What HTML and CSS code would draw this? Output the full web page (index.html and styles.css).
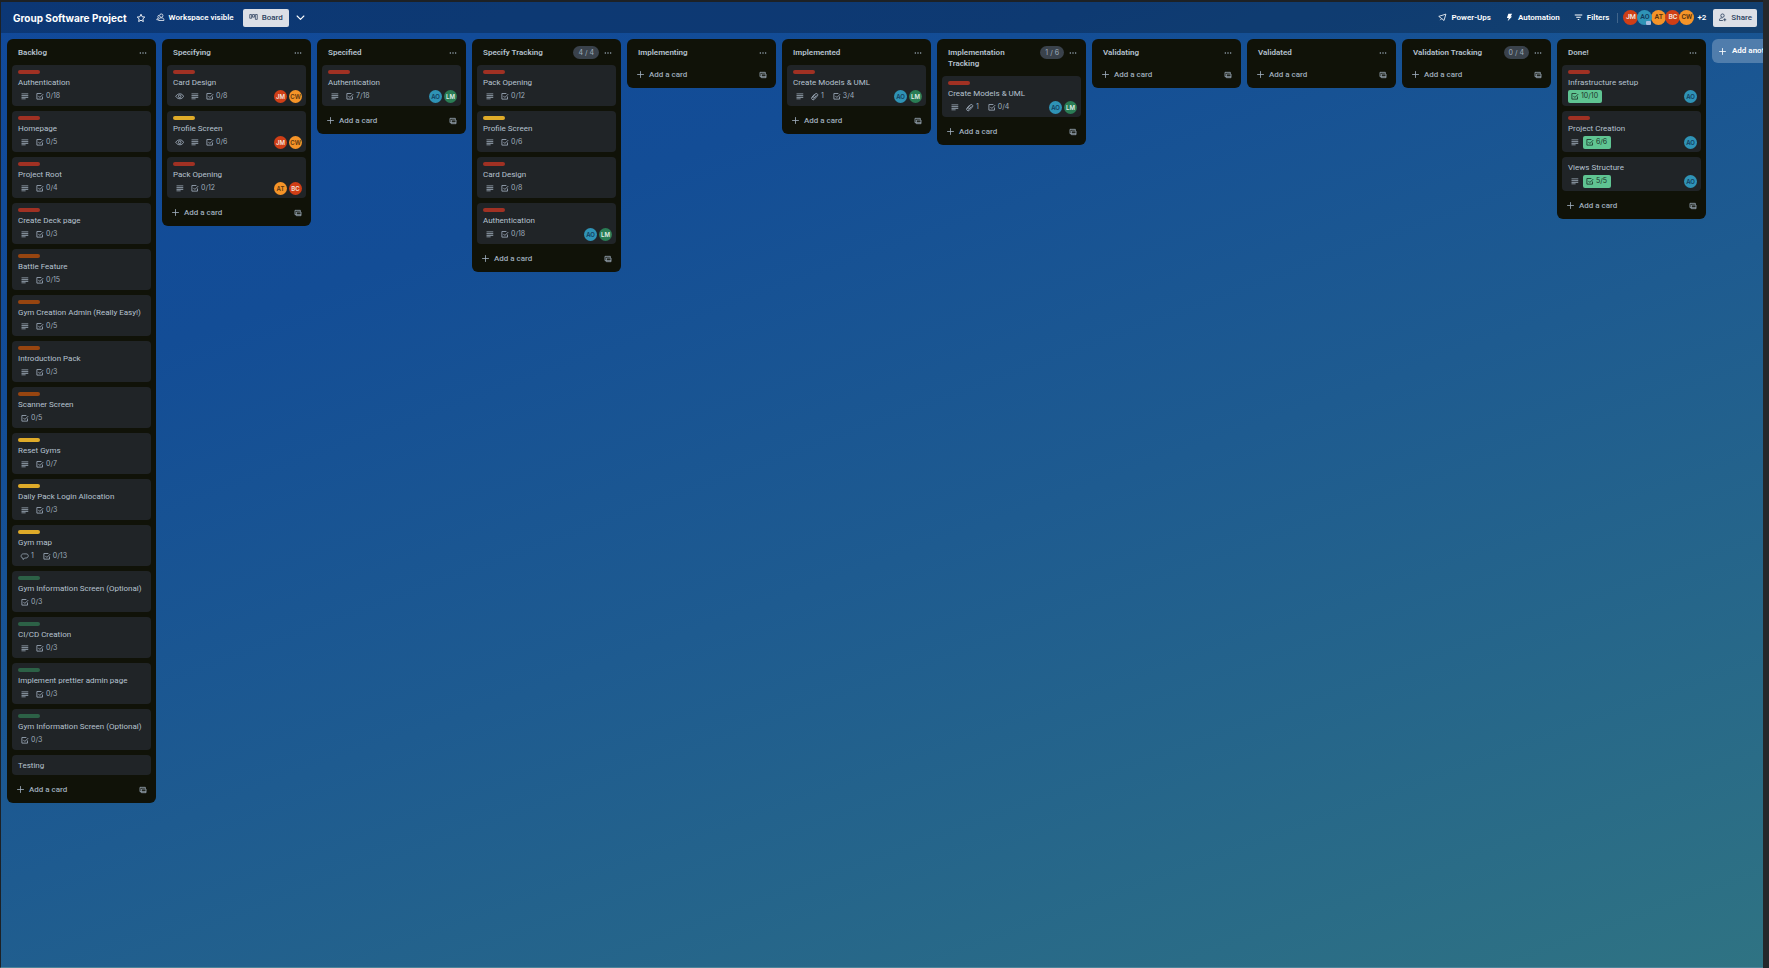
FILE: index.html
```
<!DOCTYPE html>
<html lang="en">
<head>
<meta charset="utf-8">
<title>Group Software Project</title>
<link rel="stylesheet" href="styles.css">
</head>
<body>
<svg class="sprite" aria-hidden="true">
  <symbol id="desc" viewBox="0 0 24 24"><path fill="currentColor" d="M4 4h18v2.200H4zM4 8.400h18v2.200H4zM4 12.800h18v2.200H4zM4 17.200h11v2.200H4z"/></symbol>
  <symbol id="check" viewBox="0 0 24 24"><path fill="none" stroke="currentColor" stroke-width="2.200" stroke-linejoin="round" d="M17 4H5v15h15v-7M9 10.500l4 4 9-9"/></symbol>
  <symbol id="eye" viewBox="0 0 24 24"><path fill="none" stroke="currentColor" stroke-width="2.400" d="M2 11.500c3-5 7-6.500 11-6.500s7 1.500 10 6.500c-3 5-6 6.500-10 6.500s-8-1.500-11-6.500z"/><circle cx="12.500" cy="11.500" r="3.500" fill="none" stroke="currentColor" stroke-width="2.400"/></symbol>
  <symbol id="comment" viewBox="0 0 24 24"><path fill="none" stroke="currentColor" stroke-width="2" d="M8 16c-3 0-5-2-5-5s2-6 6-6h7c4 0 6 2 6 5s-2 6-6 6h-3l-5 4z"/></symbol>
  <symbol id="clip" viewBox="0 0 24 24"><path fill="none" stroke="currentColor" stroke-width="2.400" d="M12 6l-7 8c-3 4 3 9 6 6l9-10c3-4-3-8-6-5L8 13c-2 3 1 4 3 3l6-7"/></symbol>
  <symbol id="plus" viewBox="0 0 24 24"><path fill="none" stroke="currentColor" stroke-width="2.200" d="M12 3v18M3 12h18"/></symbol>
  <symbol id="template" viewBox="0 0 24 24"><path fill="none" stroke="currentColor" stroke-width="2.400" stroke-linejoin="round" d="M6 17H3V4h16v4M7 9h14v11H7zM7 16h14"/></symbol>
  <symbol id="dots" viewBox="0 0 24 24"><g fill="currentColor"><circle cx="4" cy="12" r="2.200"/><circle cx="12" cy="12" r="2.200"/><circle cx="20" cy="12" r="2.200"/></g></symbol>
  <symbol id="star" viewBox="0 0 24 24"><path fill="none" stroke="currentColor" stroke-width="2.200" stroke-linejoin="round" d="M12 3l2.800 6 6.200.8-4.600 4.300 1.200 6.400L12 17.400l-5.600 3.100 1.200-6.400L3 9.800 9.200 9z"/></symbol>
  <symbol id="people" viewBox="0 0 24 24"><g fill="none" stroke="currentColor" stroke-width="2"><circle cx="14" cy="7" r="4.500"/><path d="M7 20v-2c0-4 3-5 7-5s7 1 7 5v2zM8 6c-4 1-4 5-1 7-3 1-5 2-5 5h4"/></g></symbol>
  <symbol id="board" viewBox="0 0 24 20"><g fill="none" stroke="currentColor" stroke-width="2"><path d="M2 2h5v10H2zM9.500 2h5v7h-5zM17 2h5v13h-5z"/></g></symbol>
  <symbol id="chevron" viewBox="0 0 24 24"><path fill="none" stroke="currentColor" stroke-width="3" stroke-linecap="round" stroke-linejoin="round" d="M3 8l9 9 9-9"/></symbol>
  <symbol id="rocket" viewBox="0 0 24 24"><path fill="none" stroke="currentColor" stroke-width="2.200" stroke-linejoin="round" d="M2 9L21 3l-5 17-6-5zM10 15l-4 4"/></symbol>
  <symbol id="bolt" viewBox="0 0 24 24"><path fill="currentColor" d="M9 2h10l-4 7h4L7 22l3-9H5z"/></symbol>
  <symbol id="filter" viewBox="0 0 24 24"><path fill="currentColor" d="M2 4h20v2.500H2zM6 10h12v2.500H6zM10 16h4v2.500h-4z"/></symbol>
  <symbol id="share" viewBox="0 0 24 24"><g fill="none" stroke="currentColor" stroke-width="2.200"><circle cx="12" cy="7" r="4.500"/><path d="M13 20H4v-2c0-4 4-5 8-5M18 14v8M14 18h8"/></g></symbol>
</svg>
<div class="app">
<header class="topbar">
  <h1>Group Software Project</h1>
  <button class="tool star" aria-label="Star board"><svg class="i10"><use href="#star"/></svg></button>
  <button class="tool visibility"><svg class="i9"><use href="#people"/></svg>Workspace visible</button>
  <button class="solid view"><svg class="i9"><use href="#board"/></svg>Board</button>
  <button class="tool" aria-label="Views"><svg class="i9"><use href="#chevron"/></svg></button>
  <div class="actions">
    <button class="tool"><svg class="i9"><use href="#rocket"/></svg>Power-Ups</button>
    <button class="tool"><svg class="i9"><use href="#bolt"/></svg>Automation</button>
    <button class="tool"><svg class="i9"><use href="#filter"/></svg>Filters</button>
  </div>
  <div class="members">
    <span class="avatar red">JM</span><span class="avatar blue admin">AO</span><span class="avatar orange">AT</span><span class="avatar red">BC</span><span class="avatar orange">CW</span>
    <button class="tool more">+2</button>
  </div>
  <button class="solid share"><svg class="i9"><use href="#share"/></svg>Share</button>
</header>
<main class="lists">
  <section class="list">
    <header><h2>Backlog</h2><button class="menu" aria-label="List actions"><svg class="i8"><use href="#dots"/></svg></button></header>
    <article class="card"><i class="label l-red"></i><h3>Authentication</h3><div class="badges"><span class="badge"><svg><use href="#desc"/></svg></span><span class="badge"><svg><use href="#check"/></svg><b>0/18</b></span></div></article>
    <article class="card"><i class="label l-red"></i><h3>Homepage</h3><div class="badges"><span class="badge"><svg><use href="#desc"/></svg></span><span class="badge"><svg><use href="#check"/></svg><b>0/5</b></span></div></article>
    <article class="card"><i class="label l-red"></i><h3>Project Root</h3><div class="badges"><span class="badge"><svg><use href="#desc"/></svg></span><span class="badge"><svg><use href="#check"/></svg><b>0/4</b></span></div></article>
    <article class="card"><i class="label l-red"></i><h3>Create Deck page</h3><div class="badges"><span class="badge"><svg><use href="#desc"/></svg></span><span class="badge"><svg><use href="#check"/></svg><b>0/3</b></span></div></article>
    <article class="card"><i class="label l-orange"></i><h3>Battle Feature</h3><div class="badges"><span class="badge"><svg><use href="#desc"/></svg></span><span class="badge"><svg><use href="#check"/></svg><b>0/15</b></span></div></article>
    <article class="card"><i class="label l-orange"></i><h3>Gym Creation Admin (Really Easy!)</h3><div class="badges"><span class="badge"><svg><use href="#desc"/></svg></span><span class="badge"><svg><use href="#check"/></svg><b>0/5</b></span></div></article>
    <article class="card"><i class="label l-orange"></i><h3>Introduction Pack</h3><div class="badges"><span class="badge"><svg><use href="#desc"/></svg></span><span class="badge"><svg><use href="#check"/></svg><b>0/3</b></span></div></article>
    <article class="card"><i class="label l-orange"></i><h3>Scanner Screen</h3><div class="badges"><span class="badge"><svg><use href="#check"/></svg><b>0/5</b></span></div></article>
    <article class="card"><i class="label l-yellow"></i><h3>Reset Gyms</h3><div class="badges"><span class="badge"><svg><use href="#desc"/></svg></span><span class="badge"><svg><use href="#check"/></svg><b>0/7</b></span></div></article>
    <article class="card"><i class="label l-yellow"></i><h3>Daily Pack Login Allocation</h3><div class="badges"><span class="badge"><svg><use href="#desc"/></svg></span><span class="badge"><svg><use href="#check"/></svg><b>0/3</b></span></div></article>
    <article class="card"><i class="label l-yellow"></i><h3>Gym map</h3><div class="badges"><span class="badge"><svg><use href="#comment"/></svg><b>1</b></span><span class="badge"><svg><use href="#check"/></svg><b>0/13</b></span></div></article>
    <article class="card"><i class="label l-green"></i><h3>Gym Information Screen (Optional)</h3><div class="badges"><span class="badge"><svg><use href="#check"/></svg><b>0/3</b></span></div></article>
    <article class="card"><i class="label l-green"></i><h3>CI/CD Creation</h3><div class="badges"><span class="badge"><svg><use href="#desc"/></svg></span><span class="badge"><svg><use href="#check"/></svg><b>0/3</b></span></div></article>
    <article class="card"><i class="label l-green"></i><h3>Implement prettier admin page</h3><div class="badges"><span class="badge"><svg><use href="#desc"/></svg></span><span class="badge"><svg><use href="#check"/></svg><b>0/3</b></span></div></article>
    <article class="card"><i class="label l-green"></i><h3>Gym Information Screen (Optional)</h3><div class="badges"><span class="badge"><svg><use href="#check"/></svg><b>0/3</b></span></div></article>
    <article class="card"><h3>Testing</h3></article>
    <footer><button class="add"><svg class="i9"><use href="#plus"/></svg>Add a card</button><button class="menu" aria-label="Create from template"><svg class="i8"><use href="#template"/></svg></button></footer>
  </section>

  <section class="list">
    <header><h2>Specifying</h2><button class="menu" aria-label="List actions"><svg class="i8"><use href="#dots"/></svg></button></header>
    <article class="card"><i class="label l-red"></i><h3>Card Design</h3><div class="badges"><span class="badge"><svg><use href="#eye"/></svg></span><span class="badge"><svg><use href="#desc"/></svg></span><span class="badge"><svg><use href="#check"/></svg><b>0/8</b></span><span class="who"><span class="avatar red">JM</span><span class="avatar orange">CW</span></span></div></article>
    <article class="card"><i class="label l-yellow"></i><h3>Profile Screen</h3><div class="badges"><span class="badge"><svg><use href="#eye"/></svg></span><span class="badge"><svg><use href="#desc"/></svg></span><span class="badge"><svg><use href="#check"/></svg><b>0/6</b></span><span class="who"><span class="avatar red">JM</span><span class="avatar orange">CW</span></span></div></article>
    <article class="card"><i class="label l-red"></i><h3>Pack Opening</h3><div class="badges"><span class="badge"><svg><use href="#desc"/></svg></span><span class="badge"><svg><use href="#check"/></svg><b>0/12</b></span><span class="who"><span class="avatar orange">AT</span><span class="avatar red">BC</span></span></div></article>
    <footer><button class="add"><svg class="i9"><use href="#plus"/></svg>Add a card</button><button class="menu" aria-label="Create from template"><svg class="i8"><use href="#template"/></svg></button></footer>
  </section>

  <section class="list">
    <header><h2>Specified</h2><button class="menu" aria-label="List actions"><svg class="i8"><use href="#dots"/></svg></button></header>
    <article class="card"><i class="label l-red"></i><h3>Authentication</h3><div class="badges"><span class="badge"><svg><use href="#desc"/></svg></span><span class="badge"><svg><use href="#check"/></svg><b>7/18</b></span><span class="who"><span class="avatar blue">AO</span><span class="avatar green">LM</span></span></div></article>
    <footer><button class="add"><svg class="i9"><use href="#plus"/></svg>Add a card</button><button class="menu" aria-label="Create from template"><svg class="i8"><use href="#template"/></svg></button></footer>
  </section>

  <section class="list">
    <header><h2>Specify Tracking</h2><span class="count">4 / 4</span><button class="menu" aria-label="List actions"><svg class="i8"><use href="#dots"/></svg></button></header>
    <article class="card"><i class="label l-red"></i><h3>Pack Opening</h3><div class="badges"><span class="badge"><svg><use href="#desc"/></svg></span><span class="badge"><svg><use href="#check"/></svg><b>0/12</b></span></div></article>
    <article class="card"><i class="label l-yellow"></i><h3>Profile Screen</h3><div class="badges"><span class="badge"><svg><use href="#desc"/></svg></span><span class="badge"><svg><use href="#check"/></svg><b>0/6</b></span></div></article>
    <article class="card"><i class="label l-red"></i><h3>Card Design</h3><div class="badges"><span class="badge"><svg><use href="#desc"/></svg></span><span class="badge"><svg><use href="#check"/></svg><b>0/8</b></span></div></article>
    <article class="card"><i class="label l-red"></i><h3>Authentication</h3><div class="badges"><span class="badge"><svg><use href="#desc"/></svg></span><span class="badge"><svg><use href="#check"/></svg><b>0/18</b></span><span class="who"><span class="avatar blue">AO</span><span class="avatar green">LM</span></span></div></article>
    <footer><button class="add"><svg class="i9"><use href="#plus"/></svg>Add a card</button><button class="menu" aria-label="Create from template"><svg class="i8"><use href="#template"/></svg></button></footer>
  </section>

  <section class="list">
    <header><h2>Implementing</h2><button class="menu" aria-label="List actions"><svg class="i8"><use href="#dots"/></svg></button></header>
    <footer><button class="add"><svg class="i9"><use href="#plus"/></svg>Add a card</button><button class="menu" aria-label="Create from template"><svg class="i8"><use href="#template"/></svg></button></footer>
  </section>

  <section class="list">
    <header><h2>Implemented</h2><button class="menu" aria-label="List actions"><svg class="i8"><use href="#dots"/></svg></button></header>
    <article class="card"><i class="label l-red"></i><h3>Create Models &amp; UML</h3><div class="badges"><span class="badge"><svg><use href="#desc"/></svg></span><span class="badge"><svg><use href="#clip"/></svg><b>1</b></span><span class="badge"><svg><use href="#check"/></svg><b>3/4</b></span><span class="who"><span class="avatar blue">AO</span><span class="avatar green">LM</span></span></div></article>
    <footer><button class="add"><svg class="i9"><use href="#plus"/></svg>Add a card</button><button class="menu" aria-label="Create from template"><svg class="i8"><use href="#template"/></svg></button></footer>
  </section>

  <section class="list">
    <header><h2>Implementation Tracking</h2><span class="count">1 / 6</span><button class="menu" aria-label="List actions"><svg class="i8"><use href="#dots"/></svg></button></header>
    <article class="card"><i class="label l-red"></i><h3>Create Models &amp; UML</h3><div class="badges"><span class="badge"><svg><use href="#desc"/></svg></span><span class="badge"><svg><use href="#clip"/></svg><b>1</b></span><span class="badge"><svg><use href="#check"/></svg><b>0/4</b></span><span class="who"><span class="avatar blue">AO</span><span class="avatar green">LM</span></span></div></article>
    <footer><button class="add"><svg class="i9"><use href="#plus"/></svg>Add a card</button><button class="menu" aria-label="Create from template"><svg class="i8"><use href="#template"/></svg></button></footer>
  </section>

  <section class="list">
    <header><h2>Validating</h2><button class="menu" aria-label="List actions"><svg class="i8"><use href="#dots"/></svg></button></header>
    <footer><button class="add"><svg class="i9"><use href="#plus"/></svg>Add a card</button><button class="menu" aria-label="Create from template"><svg class="i8"><use href="#template"/></svg></button></footer>
  </section>

  <section class="list">
    <header><h2>Validated</h2><button class="menu" aria-label="List actions"><svg class="i8"><use href="#dots"/></svg></button></header>
    <footer><button class="add"><svg class="i9"><use href="#plus"/></svg>Add a card</button><button class="menu" aria-label="Create from template"><svg class="i8"><use href="#template"/></svg></button></footer>
  </section>

  <section class="list">
    <header><h2>Validation Tracking</h2><span class="count">0 / 4</span><button class="menu" aria-label="List actions"><svg class="i8"><use href="#dots"/></svg></button></header>
    <footer><button class="add"><svg class="i9"><use href="#plus"/></svg>Add a card</button><button class="menu" aria-label="Create from template"><svg class="i8"><use href="#template"/></svg></button></footer>
  </section>

  <section class="list">
    <header><h2>Done!</h2><button class="menu" aria-label="List actions"><svg class="i8"><use href="#dots"/></svg></button></header>
    <article class="card"><i class="label l-red"></i><h3>Infrastructure setup</h3><div class="badges"><span class="badge done"><svg><use href="#check"/></svg><b>10/10</b></span><span class="who"><span class="avatar blue">AO</span></span></div></article>
    <article class="card"><i class="label l-red"></i><h3>Project Creation</h3><div class="badges"><span class="badge"><svg><use href="#desc"/></svg></span><span class="badge done"><svg><use href="#check"/></svg><b>6/6</b></span><span class="who"><span class="avatar blue">AO</span></span></div></article>
    <article class="card"><h3>Views Structure</h3><div class="badges"><span class="badge"><svg><use href="#desc"/></svg></span><span class="badge done"><svg><use href="#check"/></svg><b>5/5</b></span><span class="who"><span class="avatar blue">AO</span></span></div></article>
    <footer><button class="add"><svg class="i9"><use href="#plus"/></svg>Add a card</button><button class="menu" aria-label="Create from template"><svg class="i8"><use href="#template"/></svg></button></footer>
  </section>

  <button class="add-list"><svg class="i9"><use href="#plus"/></svg>Add another list</button>
</main>
</div>
</body>
</html>
```
FILE: styles.css
```
* { box-sizing: border-box; }
body {
  margin: 0;
  background: #25282b;
  font-family: Roboto, "Liberation Sans", sans-serif;
  font-size: 8px;
  line-height: 12px;
  color: #b6c2cf;
}
h1, h2, h3 { margin: 0; }
button {
  display: flex;
  align-items: center;
  border: 0;
  padding: 0;
  background: none;
  color: inherit;
  font: inherit;
  white-space: nowrap;
  cursor: pointer;
}
svg { flex: none; display: block; width: 9px; height: 9px; }
.sprite { position: absolute; width: 0; height: 0; }
.i8 { width: 8px; height: 8px; }
.i10 { width: 10px; height: 10px; }

.app {
  display: flex;
  flex-direction: column;
  min-height: 100vh;
  margin-right: 6px;
  border: solid #1d2125;
  border-width: 2px 0 0 1px;
  border-bottom: 1px solid #4d8499;
  background: linear-gradient(160deg, #11499a 0%, #134d96 25%, #1e5b90 55%, #2f7383 100%);
  overflow: hidden;
}

.topbar {
  display: flex;
  align-items: center;
  height: 31px;
  padding: 0 6px 0 12px;
  background: rgba(0, 0, 0, 0.24);
  color: #fff;
  font-weight: 600;
}
.topbar h1 { font-family: Inter, sans-serif; font-size: 10px; font-weight: 700; white-space: nowrap; }
.tool { gap: 4px; }
.star { margin-left: 9px; }
.visibility { margin: 0 9px 0 10px; }
.solid {
  height: 18px;
  padding: 0 6px;
  gap: 4px;
  border-radius: 2px;
  background: #dcdfe6;
  color: #2b3f5e;
  font-weight: 500;
}
.view { margin-right: 7px; }
.share { padding: 0 5px; }
.actions { display: flex; gap: 14px; margin-left: auto; padding-right: 8px; }
.members { display: flex; padding: 0 7px 0 5px; border-left: 1px solid rgba(255, 255, 255, 0.2); height: 10px; align-items: center; }
.members .avatar { width: 15px; height: 15px; font-size: 7px; line-height: 15px; margin-right: -1px; }
.more { margin-left: 4px; font-size: 8px; }

.avatar {
  flex: none;
  width: 13px;
  height: 13px;
  border-radius: 50%;
  font-size: 6px;
  font-weight: 600;
  line-height: 13px;
  text-align: center;
}
.red { background: #cf3e16; color: #f3e4df; }
.blue { background: #2f93b6; color: #123b5c; }
.orange { background: #f59428; color: #5a3410; }
.green { background: #2a7d55; color: #e0efe8; }
.admin { position: relative; }
.admin::after {
  content: "";
  position: absolute;
  right: 1px;
  bottom: 0;
  width: 5px;
  height: 4px;
  border-radius: 1px;
  background: #a9bde0;
}

.lists {
  flex: 1;
  display: flex;
  align-items: flex-start;
  gap: 6px;
  padding: 6px 0 6px 6px;
  overflow: hidden;
}
.list {
  flex: none;
  width: 149px;
  padding: 0 5px;
  border-radius: 6px;
  background: #101208;
}
.list > header {
  display: flex;
  align-items: flex-start;
  min-height: 26px;
  padding: 8px 4px 7px 6px;
}
.list h2 { flex: 1; padding-right: 10px; font-size: 8px; font-weight: 600; line-height: 11px; }
.list > header .menu { height: 11px; }
.menu { color: #9fadbc; }
.count {
  height: 13px;
  margin: -1px 5px -1px 0;
  padding: 0 5px;
  border-radius: 7px;
  background: #3a424b;
  color: #9fadbc;
  font-family: Inter, sans-serif;
  font-size: 7px;
  line-height: 13px;
}
.list > footer {
  display: flex;
  align-items: center;
  justify-content: space-between;
  height: 23px;
  padding: 0 4px 4px;
}
.add { gap: 4px; font-weight: 500; color: #9fadbc; }

.card {
  margin-bottom: 5px;
  padding: 4px 4px 3px 6px;
  border-radius: 4px;
  background: #202427;
}
.label { display: block; width: 22px; height: 4px; margin: 1px 0 2px; border-radius: 2px; }
.l-red { background: #a03123; }
.l-orange { background: #974510; }
.l-yellow { background: #dfab29; }
.l-green { background: #2c6146; }
.card h3 { padding-top: 1px; font-size: 8px; font-weight: 400; line-height: 12px; }
.badges { display: flex; align-items: center; gap: 2px; height: 14px; color: #9fadbc; font-family: Inter, sans-serif; font-size: 7px; }
.badge { display: flex; align-items: center; height: 13px; padding: 0 2px; border-radius: 2px; }
.badge b { padding: 0 2px; font-weight: 400; }
.done { background: #5fc492; color: #1c3329; }
.who { display: flex; gap: 2px; margin-left: auto; }

.add-list {
  flex: none;
  width: 149px;
  height: 24px;
  padding: 0 6px;
  gap: 5px;
  border-radius: 6px;
  background: rgba(255, 255, 255, 0.24);
  color: #fff;
  font-weight: 600;
}
```
